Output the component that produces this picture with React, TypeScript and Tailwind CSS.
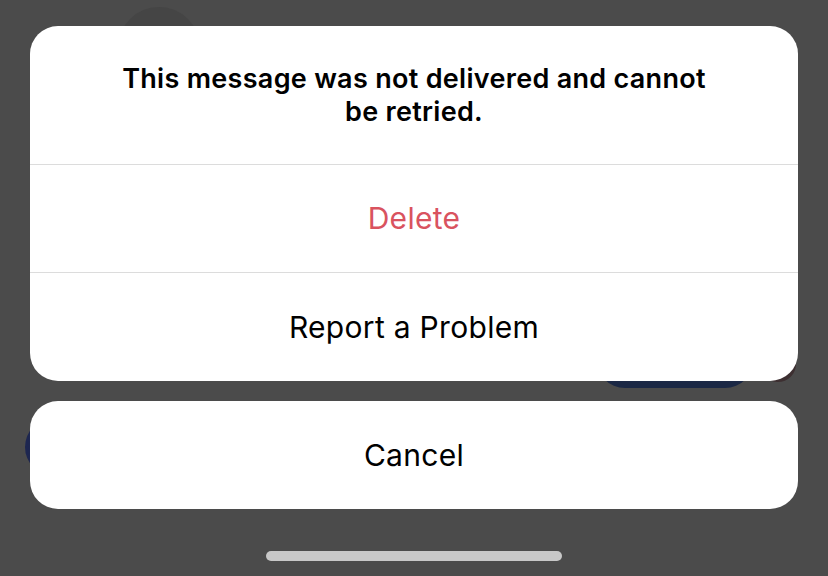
import React from "react";

export default function App() {
  return (
    <div
      className="relative w-[828px] h-[576px] overflow-hidden bg-[#4b4b4b]"
      style={{ fontFamily: 'Inter, "Noto Sans", sans-serif' }}
    >
      {/* dimmed page behind */}
      <div className="absolute left-[118px] top-[7px] w-[82px] h-[82px] rounded-full bg-[#454545]" />
      <div className="absolute left-[596px] top-[330px] w-[158px] h-[58px] rounded-[29px] bg-[#1b2845]" />
      <div className="absolute left-[760px] top-[340px] w-[36px] h-[42px] rounded-full bg-[#3d2f31]" />
      <div className="absolute left-[25px] top-[418px] w-[58px] h-[58px] rounded-full bg-[#1d2650]" />

      <div className="relative flex flex-col px-[30px] pt-[26px]">
        <div className="flex flex-col rounded-[28px] bg-white overflow-hidden">
          <div className="h-[138px] flex items-center justify-center px-[84px]">
            <p className="text-center text-[27px] leading-[33px] font-semibold text-black tracking-[0.3px]">
              This message was not delivered and cannot be retried.
            </p>
          </div>
          <div className="h-px bg-[#dcdcdc]" />
          <div className="h-[107px] flex items-center justify-center">
            <span className="text-[30px] tracking-[0.3px] text-[#d9535f]">Delete</span>
          </div>
          <div className="h-px bg-[#dcdcdc]" />
          <div className="h-[108px] flex items-center justify-center">
            <span className="text-[30px] tracking-[0.3px] text-black">Report a Problem</span>
          </div>
        </div>
        <div className="mt-[20px] h-[108px] rounded-[28px] bg-white flex items-center justify-center">
          <span className="text-[30px] tracking-[0.3px] text-black">Cancel</span>
        </div>
        <div className="mt-[42px] flex justify-center">
          <div className="w-[296px] h-[10px] rounded-full bg-[#c8c8c8]" />
        </div>
      </div>
    </div>
  );
}
